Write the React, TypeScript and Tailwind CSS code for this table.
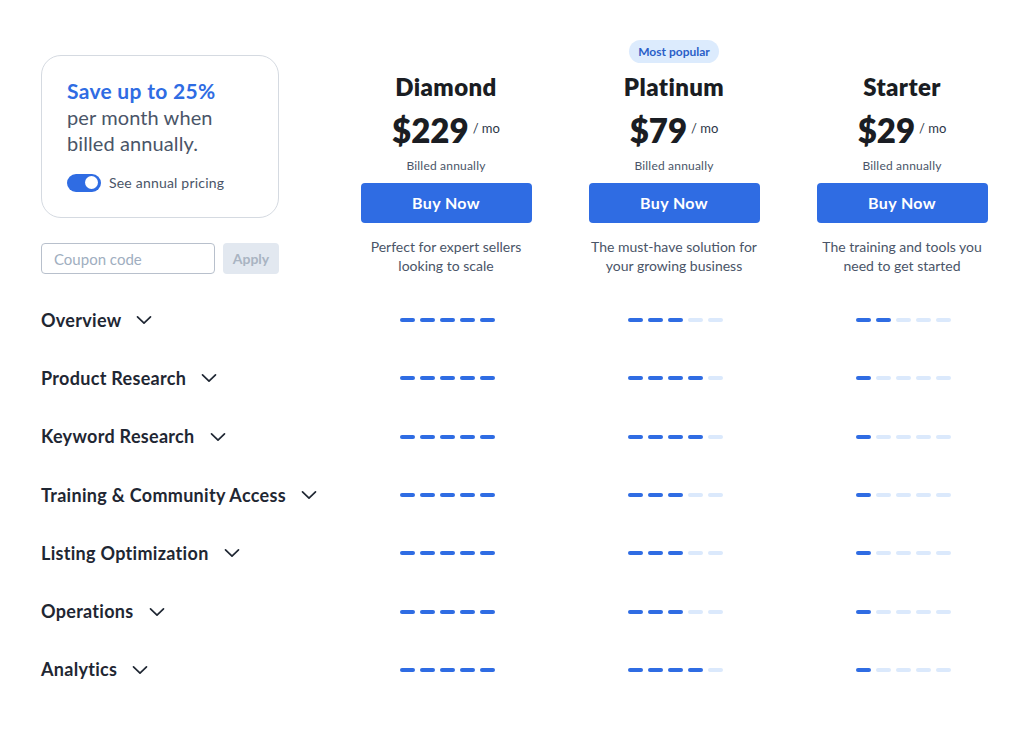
import { useState } from 'react';

type Plan = { name: string; price: string; desc: string[]; popular?: boolean };

const plans: Plan[] = [
  { name: 'Diamond', price: '$229', desc: ['Perfect for expert sellers', 'looking to scale'] },
  { name: 'Platinum', price: '$79', desc: ['The must-have solution for', 'your growing business'], popular: true },
  { name: 'Starter', price: '$29', desc: ['The training and tools you', 'need to get started'] },
];

// filled dashes per plan: Diamond, Platinum, Starter
const features: { label: string; levels: number[] }[] = [
  { label: 'Overview', levels: [5, 3, 2] },
  { label: 'Product Research', levels: [5, 4, 1] },
  { label: 'Keyword Research', levels: [5, 4, 1] },
  { label: 'Training & Community Access', levels: [5, 3, 1] },
  { label: 'Listing Optimization', levels: [5, 3, 1] },
  { label: 'Operations', levels: [5, 3, 1] },
  { label: 'Analytics', levels: [5, 4, 1] },
];

function Chevron() {
  return (
    <svg width="16" height="10" viewBox="0 0 16 10" fill="none" className="shrink-0">
      <path d="M1.5 1.8 L8 8.2 L14.5 1.8" stroke="#1f2733" strokeWidth="1.7" strokeLinecap="round" strokeLinejoin="round" />
    </svg>
  );
}

function Dashes({ filled }: { filled: number }) {
  return (
    <div className="flex gap-[5px]">
      {[0, 1, 2, 3, 4].map((i) => (
        <span
          key={i}
          className={`h-[4px] w-[15px] rounded-full ${i < filled ? 'bg-[#2f6ce3]' : 'bg-[#dbe9fc]'}`}
        />
      ))}
    </div>
  );
}

export default function App() {
  const [annual, setAnnual] = useState(true);
  const [coupon, setCoupon] = useState('');

  return (
    <main className="min-h-[733px] w-[1024px] bg-white pl-[41px] pt-[40px] text-[#1a202c]" style={{ fontFamily: 'Lato, "Noto Sans", sans-serif' }}>
      <div className="grid grid-cols-[291px_228px_228px_228px]">
        {/* left header cell */}
        <div>
          <div className="mt-[15px] h-[163px] w-[238px] rounded-[20px] border border-[#d5dae1] pl-[25px] pt-[22px]">
            <div className="text-[21px] font-bold leading-[26px] tracking-[0.3px] text-[#2f6ce3]">Save up to 25%</div>
            <div className="text-[20px] leading-[26px] tracking-[0.1px] text-[#4a5568]">per month when</div>
            <div className="text-[20px] leading-[26px] tracking-[0.1px] text-[#4a5568]">billed annually.</div>
            <div className="mt-[16px] flex items-center gap-[8px]">
              <button
                type="button"
                onClick={() => setAnnual(!annual)}
                className={`flex h-[18px] w-[34px] items-center rounded-full px-[3px] ${annual ? 'justify-end bg-[#2f6ce3]' : 'justify-start bg-[#cbd5e0]'}`}
              >
                <span className="h-[13px] w-[13px] rounded-full bg-white" />
              </button>
              <span className="text-[14px] tracking-[0.2px] text-[#4a5568]">See annual pricing</span>
            </div>
          </div>
          <div className="mt-[25px] flex gap-[8px]">
            <input
              value={coupon}
              onChange={(e) => setCoupon(e.target.value)}
              placeholder="Coupon code"
              className="h-[31px] w-[174px] rounded-[4px] border border-[#b8c0cc] px-[12px] text-[15px] text-[#4a5568] outline-none placeholder:text-[#a0aec0]"
            />
            <button type="button" className="h-[31px] w-[56px] rounded-[4px] bg-[#e2e8f0] text-[14px] font-bold text-[#a9b4c2]">
              Apply
            </button>
          </div>
        </div>

        {/* plan header cells */}
        {plans.map((p) => (
          <div key={p.name} className="flex flex-col items-center">
            <div className="h-[23px]">
              {p.popular && (
                <span className="flex h-[23px] w-[90px] items-center justify-center rounded-full bg-[#dcebfd] text-[12px] font-bold text-[#2b5fc8]">
                  Most popular
                </span>
              )}
            </div>
            <div className="mt-[9px] text-[24px] font-extrabold leading-[30px] tracking-[0.4px] text-[#1a1d23]">{p.name}</div>
            <div className="mt-[8px] flex h-[40px] items-center">
              <span className="text-[33px] font-extrabold leading-[40px] text-[#1a1d23]">{p.price}</span>
              <span className="mb-[2px] ml-[4px] text-[13px] text-[#2d3748]">/ mo</span>
            </div>
            <div className="mt-[8px] text-[12px] leading-[16px] tracking-[0.2px] text-[#4a5568]">Billed annually</div>
            <button type="button" className="mt-[9px] h-[40px] w-[171px] rounded-[4px] bg-[#2f6ce3] text-[16px] font-bold tracking-[0.4px] text-white">
              Buy Now
            </button>
            <div className="mt-[14px] text-center text-[14px] leading-[19px] text-[#4a5568]">
              {p.desc.map((l) => (
                <div key={l}>{l}</div>
              ))}
            </div>
          </div>
        ))}
      </div>

      <div className="mt-[16px]">
        {features.map((f) => (
          <div key={f.label} className="grid h-[58.3px] grid-cols-[291px_228px_228px_228px] items-center">
            <div className="flex items-center gap-[15px]">
              <span className="text-[18px] font-bold tracking-[0.3px] text-[#1f2733]">{f.label}</span>
              <Chevron />
            </div>
            {f.levels.map((lv, i) => (
              <div key={i} className="flex justify-center pl-[2px]">
                <Dashes filled={lv} />
              </div>
            ))}
          </div>
        ))}
      </div>
    </main>
  );
}
